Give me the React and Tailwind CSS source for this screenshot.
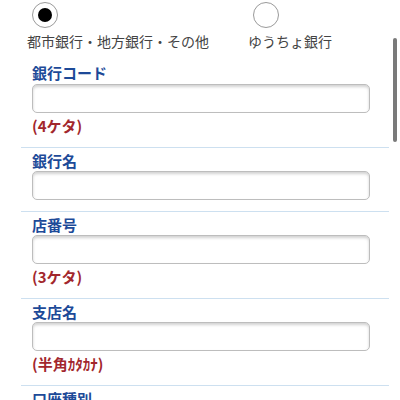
import React from "react";

const font = { fontFamily: '"Noto Sans CJK JP", "Noto Sans", sans-serif' };

function Field({ label, note, first }) {
  return (
    <div
      className={`border-b border-[#cde0f0] pl-[11px] pr-[19px] pb-[11px] ${first ? "pt-[12px]" : "pt-[3px]"}`}
    >
      <div className="h-[20px] leading-[20px] text-[15px] font-bold text-[#1d4a98]">{label}</div>
      <div className={`${first ? "mt-[1px]" : ""} h-[29px] w-[338px] rounded-[5px] border border-[#bdbdbd] bg-white shadow-[inset_0_2px_3px_rgba(0,0,0,0.18)]`} />
      {note && (
        <div className="mt-[3px] h-[20px] leading-[20px] text-[15px] font-bold text-[#a2272d]">{note}</div>
      )}
    </div>
  );
}

export default function App() {
  return (
    <div className="relative w-[400px] h-[400px] overflow-hidden bg-white" style={font}>
      <div className="flex pt-[2px]">
        <div className="ml-[27px] w-[221px] flex flex-col">
          <div className="ml-[5px] h-[26px] w-[26px] rounded-full border border-[#9a9a9a] bg-white flex items-center justify-center">
            <div className="h-[14px] w-[14px] rounded-full bg-black" />
          </div>
          <div className="mt-[3px] h-[20px] leading-[20px] text-[14px] text-[#444]">都市銀行・地方銀行・その他</div>
        </div>
        <div className="flex flex-col">
          <div className="ml-[5px] h-[26px] w-[26px] rounded-full border border-[#9a9a9a] bg-white" />
          <div className="mt-[3px] h-[20px] leading-[20px] text-[14px] text-[#444]">ゆうちょ銀行</div>
        </div>
      </div>
      <div className="ml-[21px] w-[368px]">
        <Field first label="銀行コード" note="(4ケタ)" />
        <Field label="銀行名" />
        <Field label="店番号" note="(3ケタ)" />
        <Field label="支店名" note="(半角ｶﾀｶﾅ)" />
        <Field label="口座種別" />
      </div>
      <div className="absolute left-[393px] top-[38px] h-[104px] w-[4px] rounded-full bg-[#7a7a7a]" />
    </div>
  );
}
